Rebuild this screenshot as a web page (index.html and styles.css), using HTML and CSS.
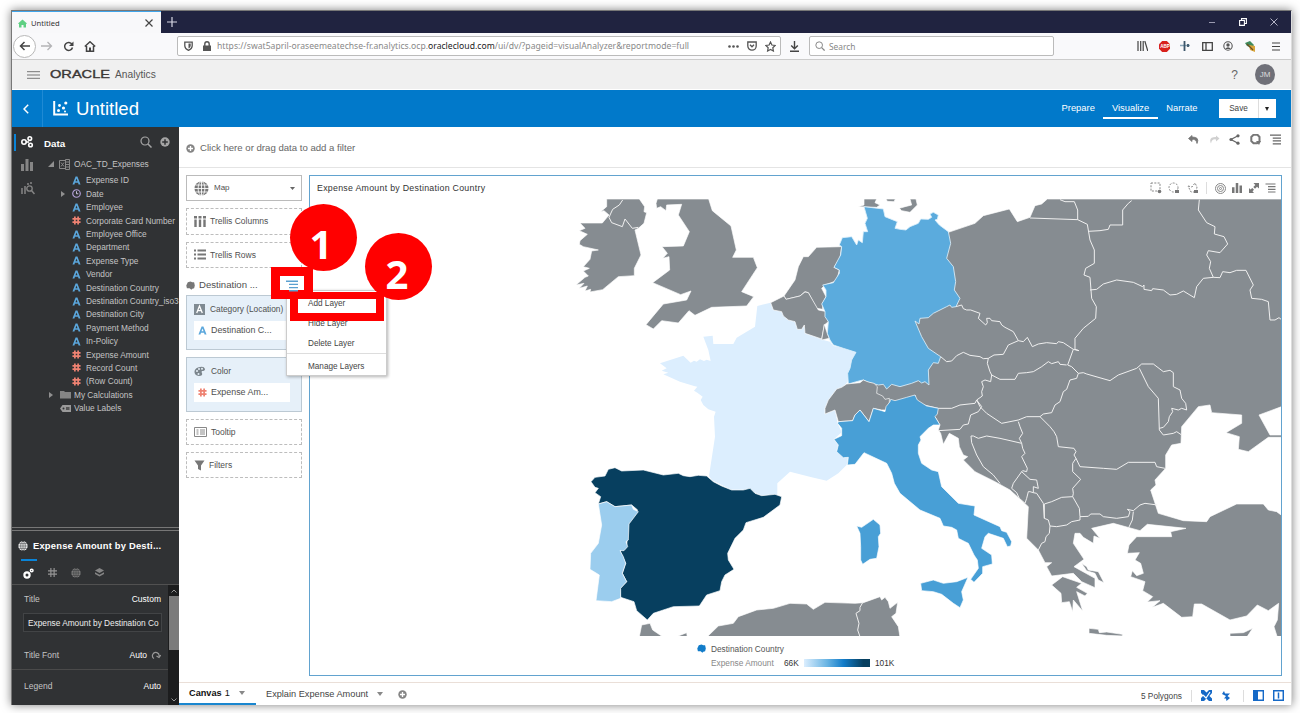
FILE: index.html
```html
<!DOCTYPE html>
<html lang="en">
<head>
<meta charset="utf-8">
<title>Untitled</title>
<link rel="stylesheet" href="styles.css">
</head>
<body>
<svg class="defs" width="0" height="0">
<defs>
<symbol id="a" viewBox="0 0 10 10"><path d="M.5 9.5 4 .5h2l3.5 9H7.300L6.700 7.600H3.300L2.700 9.500zM3.900 5.900h2.200L5 2.800z" fill="#5ba7dc"/></symbol>
<symbol id="hash" viewBox="0 0 10 10"><path d="M3.200.5v9M6.800.5v9M.5 3.200h9M.5 6.800h9" stroke="#ee8272" stroke-width="1.900" fill="none"/></symbol>
<symbol id="clock" viewBox="0 0 10 10"><circle cx="5" cy="5" r="4.200" fill="none" stroke="#b3a0d8" stroke-width="1.300"/><path d="M5 2.500V5.300h2" stroke="#d9cff0" fill="none"/></symbol>
<symbol id="globe" viewBox="0 0 16 16"><circle cx="8" cy="8" r="7.500" fill="currentColor"/><g fill="none" stroke="var(--grid)" stroke-width=".9"><ellipse cx="8" cy="8" rx="3.600" ry="7.500"/><path d="M8 0v16M0 8h16M1.500 4.300h13M1.500 11.700h13"/></g></symbol>
<symbol id="plus" viewBox="0 0 10 10"><circle cx="5" cy="5" r="4.700" fill="currentColor"/><path d="M5 2.200v5.600M2.200 5h5.600" stroke="var(--grid)" stroke-width="1.500"/></symbol>
<symbol id="menu" viewBox="0 0 12 12"><path d="M0 1.200h12M3 4.400h9M3 7.600h9M3 10.800h9" stroke="currentColor" stroke-width="1.400"/></symbol>
<symbol id="bars" viewBox="0 0 12 12"><path d="M0 5h3v7H0zM4.500 0h3v12h-3zM9 3h3v9H9z" fill="currentColor"/></symbol>
<symbol id="search" viewBox="0 0 12 12"><circle cx="5" cy="5" r="4" fill="none" stroke="currentColor" stroke-width="1.200"/><path d="M8 8l3.500 3.500" stroke="currentColor" stroke-width="1.500"/></symbol>
<symbol id="blob" viewBox="0 0 10 10"><path d="M2 1.500 5 .5 7 1.500 9 1.300 9.800 5 9 8 7 8.500 6 9.800 4 8 1 8 .3 5z" fill="currentColor"/></symbol>
</defs>
</svg>

<div class="window">
  <header class="tabbar">
    <div class="tab"><svg width="9" height="9" viewBox="0 0 9 9"><path d="M0 4.500 4.500.5 9 4.500 8 5V8.500H5.500V6h-2v2.500H1V5z" fill="#5fd083"/></svg><span>Untitled</span><svg class="push" width="8" height="8"><path d="M.5.5l7 7M7.500.5l-7 7" stroke="#444" stroke-width="1.200"/></svg></div>
    <svg class="newtab" width="10" height="10"><path d="M5 0v10M0 5h10" stroke="#d8d8e4" stroke-width="1.200"/></svg>
    <div class="winctl">
      <svg width="8" height="8"><path d="M1 4.500h6" stroke="#9a9ab0"/></svg>
      <svg width="8" height="8"><path d="M.6 2.500h4.800v4.900H.6zM2.500 2.500V.6h4.900v4.900h-2" fill="none" stroke="#fff" stroke-width="1.100"/></svg>
      <svg width="8" height="8"><path d="M.5.5l7 7M7.500.5l-7 7" stroke="#b4b4c6"/></svg>
    </div>
  </header>

  <div class="nav">
    <span class="back"><svg width="12" height="10"><path d="M11 5H2M5.500 1 1.500 5l4 4" fill="none" stroke="#444" stroke-width="1.500"/></svg></span>
    <svg class="fwd" width="12" height="10"><path d="M0 5h10M6.500 1l4 4-4 4" fill="none" stroke="#b4b4b6" stroke-width="1.300"/></svg>
    <svg class="reload" width="11" height="11"><path d="M9 3.200A4 4 0 1 0 9.500 6.500" fill="none" stroke="#444" stroke-width="1.500"/><path d="M10.500.5v4.500H6z" fill="#444"/></svg>
    <svg class="home" width="12" height="11"><path d="M.8 5.500 6 .8l5.200 4.700M2.500 5v5.200h7V5" fill="none" stroke="#444" stroke-width="1.500"/><path d="M5 6.500h2V10H5z" fill="#444"/></svg>
    <div class="url">
      <svg width="9" height="10"><path d="M.8 1.200h7.400V5Q8 8 4.500 9.300 1 8 .8 5z" fill="none" stroke="#555" stroke-width="1.300"/><path d="M4.500 2.500v5Q6.500 6.500 6.700 5V2.500z" fill="#555"/></svg>
      <svg class="lock" width="8" height="10"><path d="M0 4.500h8V10H0z" fill="#555"/><path d="M1.800 5V3a2.200 2.200 0 0 1 4.400 0v2" fill="none" stroke="#555" stroke-width="1.400"/></svg>
      <span class="addr">https://swat5april-oraseemeatechse-fr.analytics.ocp.<b>oraclecloud.com</b>/ui/dv/?pageid=visualAnalyzer&amp;reportmode=full</span>
      <svg class="push" width="11" height="3"><circle cx="1.500" cy="1.500" r="1.300" fill="#555"/><circle cx="5.500" cy="1.500" r="1.300" fill="#555"/><circle cx="9.500" cy="1.500" r="1.300" fill="#555"/></svg>
      <svg width="10" height="10"><path d="M.8 1h8.400v4A4.200 4.200 0 0 1 .8 5z" fill="none" stroke="#555" stroke-width="1.300"/><path d="M3 3.800l2 2 2-2" fill="none" stroke="#555" stroke-width="1.300"/></svg>
      <svg width="11" height="11" viewBox="0 0 11 11"><path d="M5.500 1 6.900 4l3.300.4-2.400 2.300.6 3.300-2.900-1.600L2.600 10l.6-3.300L.8 4.400 4.100 4z" fill="none" stroke="#555" stroke-width="1.200"/></svg>
    </div>
    <svg class="dl" width="9" height="11"><path d="M4.500 0v7.500M1.200 4.500l3.300 3.300 3.300-3.300M0 10.200h9" fill="none" stroke="#444" stroke-width="1.400"/></svg>
    <div class="searchbox"><svg width="10" height="10"><use href="#search"/></svg><span>Search</span></div>
    <div class="tools">
      <svg width="11" height="10"><path d="M1 0v10M3.700 0v10M6.200 0v10M7.800 0l3 10" stroke="#444" stroke-width="1.200"/></svg>
      <svg width="11" height="11" viewBox="0 0 11 11"><path d="M3.200 0h4.600L11 3.200v4.600L7.800 11H3.200L0 7.800V3.200z" fill="#d8201c"/><text x="1.200" y="7.200" font-size="4.600" font-weight="700" fill="#fff">ABP</text></svg>
      <svg width="11" height="11"><path d="M0 4.500h10" stroke="#8aa7b8" stroke-width="1.500"/><path d="M4.500 0v10M8 3v3" stroke="#3c566a" stroke-width="1.800"/></svg>
      <svg width="11" height="9"><path d="M.7.700h9.600v7.600H.7zM4 .7v7.600" fill="none" stroke="#444" stroke-width="1.300"/></svg>
      <svg width="10" height="10"><circle cx="5" cy="5" r="4.200" fill="none" stroke="#555" stroke-width="1.100"/><circle cx="5" cy="4" r="1.700" fill="#555"/><path d="M2 8q3-3.500 6 0z" fill="#555"/></svg>
      <svg width="12" height="11"><path d="M1 2 6 0 10 4 8 7 3 5z" fill="#3f8a5c"/><path d="M5 4l6 1v6L6 9z" fill="#d9a53a"/><path d="M3 3l6 6" stroke="#6c4d20" stroke-width="1.300"/></svg>
      <svg width="8" height="9"><path d="M0 1h8M0 4.500h8M0 8h8" stroke="#444" stroke-width="1.200"/></svg>
    </div>
  </div>

  <div class="brand">
    <svg width="13" height="8"><path d="M0 .7h13M0 4h13M0 7.300h13" stroke="#777" stroke-width="1"/></svg>
    <svg class="oracle" width="63" height="12" viewBox="0 0 63 12"><text x="0" y="9" font-size="10.500" textLength="60" lengthAdjust="spacingAndGlyphs" fill="#3b3735" stroke="#3b3735" stroke-width=".35">ORACLE</text></svg>
    <span class="product">Analytics</span>
    <span class="help">?</span>
    <span class="avatar">JM</span>
  </div>

  <div class="bluebar">
    <span class="chev"><svg width="6" height="10"><path d="M5.200.8 1 5l4.200 4.200" fill="none" stroke="#fff" stroke-width="1.500"/></svg></span>
    <svg class="logo" width="15" height="15"><path d="M1.200 0v13.500H15" fill="none" stroke="#fff" stroke-width="2"/><circle cx="5.500" cy="9.500" r="1.500" fill="#fff"/><circle cx="6.500" cy="4.500" r="1.400" fill="#fff"/><circle cx="10.500" cy="7" r="1.600" fill="#fff"/><circle cx="12.800" cy="2" r="1.600" fill="#fff"/><circle cx="12" cy="10.500" r="1" fill="#fff"/></svg>
    <h1>Untitled</h1>
    <nav class="modes"><span>Prepare</span><span class="on">Visualize</span><span>Narrate</span></nav>
    <div class="save"><span>Save</span><i></i></div>
  </div>

  <div class="body">
    <aside class="side">
      <section class="data">
        <div class="strip">
          <svg width="13" height="12"><g fill="none" stroke="#fff" stroke-width="1.600"><circle cx="3" cy="6" r="2.200"/><circle cx="8.800" cy="2.600" r="1.800"/><circle cx="9.500" cy="9" r="1.800"/><path d="M5 6h3"/></g></svg>
          <svg class="dim" width="12" height="12"><use href="#bars"/></svg>
          <svg class="dim" width="14" height="13"><path d="M1 6v6M4 4v8M7 1v2M10 0v2" stroke="currentColor" stroke-width="1.500"/><circle cx="8.500" cy="6.500" r="2.700" fill="none" stroke="currentColor" stroke-width="1.300"/><path d="M10.500 8.500l3 3.500" stroke="currentColor" stroke-width="1.500"/></svg>
        </div>
        <div class="tree">
          <div class="dhead"><b>Data</b><svg class="push" width="12" height="12"><use href="#search"/></svg><svg width="10" height="10"><use href="#plus"/></svg></div>
          <div class="root"><svg width="6" height="6"><path d="M6 0v6H0z" fill="#909090"/></svg><svg class="xls" width="11" height="11"><path d="M.5 1.500h6v8h-6zM6.500.5h4v10h-4zM2 3.500l3 4M5 3.500l-3 4M7 3h3M7 5.500h3M7 8h3" fill="none" stroke="#888"/></svg><span>OAC_TD_Expenses</span></div>
          <div class="leaf"><svg><use href="#a"/></svg>Expense ID</div>
          <div class="leaf exp"><svg><use href="#clock"/></svg>Date</div>
          <div class="leaf"><svg><use href="#a"/></svg>Employee</div>
          <div class="leaf"><svg><use href="#hash"/></svg>Corporate Card Number</div>
          <div class="leaf"><svg><use href="#a"/></svg>Employee Office</div>
          <div class="leaf"><svg><use href="#a"/></svg>Department</div>
          <div class="leaf"><svg><use href="#a"/></svg>Expense Type</div>
          <div class="leaf"><svg><use href="#a"/></svg>Vendor</div>
          <div class="leaf"><svg><use href="#a"/></svg>Destination Country</div>
          <div class="leaf"><svg><use href="#a"/></svg>Destination Country_iso3</div>
          <div class="leaf"><svg><use href="#a"/></svg>Destination City</div>
          <div class="leaf"><svg><use href="#a"/></svg>Payment Method</div>
          <div class="leaf"><svg><use href="#a"/></svg>In-Policy</div>
          <div class="leaf"><svg><use href="#hash"/></svg>Expense Amount</div>
          <div class="leaf"><svg><use href="#hash"/></svg>Record Count</div>
          <div class="leaf"><svg><use href="#hash"/></svg>(Row Count)</div>
          <div class="leaf top exp"><svg viewBox="0 0 11 9"><path d="M0 1h4l1 1h6v6.500H0z" fill="#858585"/></svg>My Calculations</div>
          <div class="leaf top"><svg viewBox="0 0 11 9"><path d="M0 4.500 2.500 1H11v7H2.500z" fill="#9a9a9a"/><circle cx="3.500" cy="4.500" r="1" fill="#303234"/><path d="M6 3h3.500v3H6z" fill="#555"/></svg>Value Labels</div>
        </div>
      </section>
      <section class="props">
        <div class="ptitle"><svg width="10" height="10"><use href="#globe"/></svg><b>Expense Amount by Desti...</b></div>
        <div class="ptabs">
          <span class="on"><svg width="11" height="11"><circle cx="4" cy="7" r="2.600" fill="none" stroke="#fff" stroke-width="2.200"/><circle cx="8.700" cy="2.500" r="1.300" fill="none" stroke="#fff" stroke-width="1.500"/></svg></span>
          <span><svg width="9" height="9" viewBox="0 0 10 10"><path d="M3.200 0v10M6.800 0v10M0 3.200h10M0 6.800h10" stroke="#959595" stroke-width="1.300"/></svg></span>
          <span class="dim"><svg width="10" height="10"><use href="#globe"/></svg></span>
          <span><svg width="9" height="9"><path d="M4.500 0 9 2.500 4.500 5 0 2.500zM0 4.300l4.500 2.400L9 4.300V6L4.500 8.500 0 6z" fill="#858585"/></svg></span>
        </div>
        <div class="pscroll">
          <div class="prows">
            <div class="prow r1"><span>Title</span><em>Custom</em></div>
            <div class="field">Expense Amount by Destination Co</div>
            <div class="prow r2"><span>Title Font</span><em>Auto</em><svg width="10" height="9"><path d="M3 7.500A3.300 3.300 0 1 1 8 5.500M9.800 4 8 6.500 5.500 5" fill="none" stroke="#999" stroke-width="1.200"/></svg></div>
            <div class="prow r3"><span>Legend</span><em>Auto</em></div>
          </div>
          <div class="sbar"><svg width="6" height="4"><path d="M.5 3.500 3 1l2.500 2.500" fill="none" stroke="#999"/></svg><i></i><svg width="6" height="4"><path d="M.5.500 3 3 5.500.500" fill="none" stroke="#999"/></svg></div>
        </div>
      </section>
    </aside>

    <main class="main">
      <div class="filter">
        <svg class="dimp" width="9" height="9"><use href="#plus"/></svg><span>Click here or drag data to add a filter</span>
        <div class="acts">
          <svg width="11" height="9"><path d="M4 .5.500 3.500 4 6.500V4.500q4-1 5 4Q12 2 4 2z" fill="#777" stroke="#777" stroke-width=".8"/></svg>
          <svg width="11" height="9"><path d="M7 .5l3.500 3L7 6.500V4.500q-4-1-5 4Q-1 2 7 2z" fill="#d0d0d0"/></svg>
          <svg width="11" height="11"><path d="M9 1.800 2 5.500 9 9.200" fill="none" stroke="#666" stroke-width="1.300"/><circle cx="9" cy="1.800" r="1.600" fill="#666"/><circle cx="2" cy="5.500" r="1.600" fill="#666"/><circle cx="9" cy="9.200" r="1.600" fill="#666"/></svg>
          <svg width="11" height="11"><path d="M3.500.8h4L9.500 3v4L7 9.200H3.500L1.300 7V3z" fill="none" stroke="#777" stroke-width="2"/><path d="M6 7h5l-2 4z" fill="#777"/></svg>
          <svg width="11" height="11"><use href="#menu"/></svg>
        </div>
      </div>

      <div class="work">
        <div class="shelf">
          <div class="pick"><svg width="15" height="15"><use href="#globe"/></svg><span>Map</span><svg class="push" width="5" height="3"><path d="M0 0h5L2.500 3z" fill="#666"/></svg></div>
          <div class="drop"><svg width="12" height="11"><path d="M1.500 3.500V11M6 3.500V11M10.500 3.500V11M0 1.200h3M4.500 1.200h3M9 1.200h3" stroke="#777" stroke-width="2.400"/></svg><span>Trellis Columns</span></div>
          <div class="drop"><svg width="12" height="11"><path d="M3.500 1.500H12M3.500 5.500H12M3.500 9.500H12M0 1.500h2M0 5.500h2M0 9.500h2" stroke="#777" stroke-width="2.200"/></svg><span>Trellis Rows</span></div>
          <div class="layer"><svg width="9" height="9"><use href="#blob"/></svg><span>Destination ...</span></div>
          <div class="well"><div class="wh"><svg width="11" height="11"><path d="M0 0h11v11H0z" fill="#7f8a92"/><path d="M2.700 9 5.500 2l2.800 7M3.700 6.700h3.600" stroke="#fff" stroke-width="1.300" fill="none"/></svg><span>Category (Location)</span></div><div class="chip"><svg width="9" height="9"><use href="#a"/></svg><span>Destination C...</span></div></div>
          <div class="well"><div class="wh"><svg width="12" height="11"><path d="M6 1Q10 0 11 3 11 5 8 5 7 6 8 7 9 10 5 10 0 9.500.5 5 1.500 1.500 6 1z" fill="#7b858c"/><g fill="#e4eef6"><circle cx="3" cy="5" r="1"/><circle cx="5" cy="3" r="1"/><circle cx="8" cy="2.700" r="1"/><circle cx="4.500" cy="8" r="1"/></g></svg><span>Color</span></div><div class="chip"><svg width="9" height="9"><use href="#hash"/></svg><span>Expense Am...</span></div></div>
          <div class="drop"><svg width="13" height="10"><path d="M.5.5h12v9H.5z" fill="none" stroke="#888"/><path d="M2.500 3h2M6 3h5M2.500 5h2M6 5h5M2.500 7h2M6 7h5" stroke="#888"/></svg><span>Tooltip</span></div>
          <div class="drop"><svg width="11" height="11"><path d="M.5.500h10L7 5.500v5L4 9V5.500z" fill="#777"/></svg><span>Filters</span></div>
        </div>
        <section class="viz">
          <div class="vhead"><span>Expense Amount by Destination Country</span>
            <div class="vacts">
              <svg width="12" height="12"><path d="M1 1h9v8H1z" fill="none" stroke="#888" stroke-dasharray="2 1.300"/><circle cx="9.500" cy="9.500" r="1.800" fill="#777"/></svg>
              <svg width="12" height="12"><circle cx="5.500" cy="5.500" r="4.500" fill="none" stroke="#888" stroke-dasharray="2 1.300"/><path d="M7 8h4v3H7z" fill="#777"/></svg>
              <svg width="12" height="12"><path d="M1 4l4 1 3-4 2 4-1 5H4z" fill="none" stroke="#888" stroke-dasharray="2 1.300"/><path d="M7 8h4v3H7z" fill="#777"/></svg>
              <i></i>
              <svg width="11" height="11"><g fill="none" stroke="#888"><circle cx="5.500" cy="5.500" r="5"/><circle cx="5.500" cy="5.500" r="3"/><circle cx="5.500" cy="5.500" r="1"/></g></svg>
              <svg width="10" height="10"><use href="#bars"/></svg>
              <svg width="10" height="10"><path d="M4.500 0H10v5.500L8 3.700 6 5.700 4.300 4l2-2zM0 5v5h5L3.500 8.300 5 6.800 3.300 5 1.500 6.500z" fill="#777"/></svg>
              <svg width="11" height="10"><use href="#menu"/></svg>
            </div>
          </div>
          <svg class="map" viewBox="310 199 971 437" width="971" height="437">
            <g transform="translate(560 190) scale(.33333)" class="land">
              <path d="M140 27H238L254 50 252 65 260 68 252 100 235 115 225 120 243 195 223 235V257L175 260 128 299 90 306 92 298 75 303 82 288 58 295 72 280 48 285 75 262 85 258 70 243 88 235 70 230 90 208 95 183 115 180 70 170 58 163 60 152 82 133 58 122 75 115 60 99H127L147 75 132 62 122 65 140 50Z"/>
              <path class="bd" d="M188 30 178 45 158 58 147 82 155 98 187 110 195 87 217 115 235 112"/>
              <path d="M292 27H446L457 62 513 108 529 180 518 202H580L592 233 545 305 581 320 560 348 455 352 405 376 387 362 355 399 305 392 280 417 258 404 310 342 380 330 393 303 362 314 278 278 329 240 327 200 308 205 322 190 306 170 370 168 388 125 355 75 365 43 320 45 318 62 302 50 290 55 288 40Z"/>
              <path class="fr" d="M592 348 632 338 640 360 668 365 710 400 715 415 735 410 750 430 790 450 810 455 820 468 860 475 888 485 870 530 863 575 845 598 800 645 795 672 825 660 833 700 845 727 822 748 835 765 830 785 865 802 860 825 835 850 800 872 755 862 690 845 652 880V915L605 917 570 900H515L455 870 447 858 465 740 462 680 467 665 445 658 430 645 422 630 428 620 412 608 402 602 412 590 402 588 360 575 310 553 325 548 305 542 320 535 300 520 370 497 392 518 402 512 410 515 420 508 432 513 440 509 452 513 445 480 430 440 458 437 460 462H520L530 443 585 410Z"/>
              <path d="M770 172 845 170 840 205 822 232 838 240 830 272 795 285 785 295 798 320 788 340 788 358 770 355 745 308 735 305 720 318 678 328 672 318 705 270 715 230 730 200 745 200Z"/>
              <path d="M632 338 672 318 678 328 720 318 735 306 745 308 775 360 800 365 805 395 793 405 785 447 735 430 733 405 725 418H712L705 395 685 390 670 378 665 365 640 360Z"/>
              <path d="M793 403 800 425 808 445 785 450Z"/>
            </g>
            <g transform="translate(800 190) scale(.33333)" class="land">
              <path d="M445 127 525 100 550 77 628 57 652 95 690 82 705 47 725 42 742 27H1450V648L1377 675 1410 735H1450V742H1405L1345 785 1315 778 1318 740 1278 728 1325 700V675L1235 668 1230 645 1195 650 1145 710 1143 760 1115 765 1097 795V835L1065 870 1068 885 1052 900 1075 970 1150 992 1220 995 1230 980 1310 942H1390L1405 960 1430 965 1450 980V1345H1433L1422 1310 1432 1290 1436 1240 1405 1262 1372 1245 1340 1278 1290 1290 1205 1242H1183L1178 1280 1145 1282 1090 1240 1057 1252 1080 1232 1042 1236 1058 1220 1028 1202 1035 1175 992 1160 997 1142 1010 1157 1030 1150 1022 1120 1005 1110 1018 1088 982 1090 987 1065 1010 1040H1115L1112 1025 1158 1015 1042 1003 1020 1022 940 1000 875 1015 900 1045 882 1038 880 1060 850 1042 840 1030H825L820 1060 852 1108 822 1130 885 1165V1193L845 1175 820 1150 755 1158 740 1130 755 1118 735 1118 715 1080 680 1045 685 950 630 900 585 875 525 845 490 810 503 800 490 795 478 770 475 745 448 730 430 763 422 730 415 720 420 705 405 680 360 650 270 640 225 620 220 560 300 400Z"/>
              <g class="bd"><path d="M690 84 833 89 862 103M780 29 795 35H823L833 60V89M862 103 870 150 883 180V220L857 235 852 255 870 262 873 300 875 325 889 350 887 385 850 415 825 445V478L837 482M865 124 900 122 925 118 930 105H968V60L985 40 995 32"/>
              <path d="M870 300 890 298 910 282 950 270 1000 277 1028 290 1032 285 1032 298 1055 302 1058 296 1090 300 1110 315 1130 313 1150 303 1183 323 1190 290 1210 265 1240 262 1260 263 1268 245 1290 248 1310 241H1338L1360 285 1350 300 1355 325 1385 328 1405 335 1410 390H1425L1437 383 1446 390M1198 29 1195 60 1220 98 1245 110 1243 132 1272 140 1283 162 1260 188 1225 182 1220 195 1232 215 1228 235 1240 262"/>
              <path d="M468 350 485 345 490 356 500 360 512 360 540 370 535 385 557 405 562 398 560 385 570 385 575 392 600 395 605 405 615 412 640 425 655 452 670 455 682 442 697 470 715 462 740 458 770 461 775 455 790 458 820 478 837 482M422 500 440 515 455 513 470 497 490 487 510 496 540 500 550 506 565 505 582 495 610 493 625 465 655 452M565 505 562 520 570 545 575 555 600 568H645L655 550 680 548 700 545 725 530 745 515 755 521 775 515 780 523 800 525M820 478 803 525 815 530 835 550M575 555 572 575 555 570 545 575 550 590 545 605 547 618 530 630 540 650 560 670 605 700 655 690 680 680H720L730 672 755 668 765 645 780 635 790 605 800 598 810 570 830 565 835 550 850 548 860 552 930 572 955 555 1010 535 1025 522 1060 522 1090 545 1110 541 1120 548V590L1140 600 1145 625 1157 640 1160 660 1145 655 1135 660 1115 655 1118 665 1108 680 1105 695 1090 712 1078 715"/>
              <path d="M1018 535 1045 590 1075 625 1078 720 1090 735 1120 730 1130 725 1145 735M345 615 350 640 415 655 455 655 480 645 525 640 530 630 545 650M720 680 750 710 762 725 770 740 775 770 822 775 828 785 822 795 828 805 840 830 910 835 950 838 985 817H1065L1070 830 1095 835M655 695 660 710 668 730 658 745 665 760 668 775 675 790 665 800 682 835 680 845 668 842 665 845 690 868 710 870 715 895 700 890 700 908 690 905 685 905 680 925 675 940M828 805 818 820 818 845 842 868 818 895 820 910 818 920 838 955 840 980 865 979 872 972 900 972 910 980 950 985 985 980 990 965 982 958 1000 962 1020 945 1035 940 1072 945M1000 965 997 990 985 1015M818 920 785 922 755 935 733 942V985L745 990 750 1008 770 1010 800 1005 815 995 840 990 840 980M750 1008 748 1030 738 1040 735 1055 725 1060 715 1080M733 985 730 940 710 910 700 908M675 940 658 925 650 908 635 895 640 880 665 845M665 760 600 745 560 738 535 745 520 738 513 738 515 758 530 795 550 830 580 855 600 880M415 722 480 718 490 705 505 702 512 675 535 665 545 650"/></g>
              <path d="M192 27H230L225 38 240 45 230 52 175 50 192 45ZM258 27H286L282 35 262 34ZM298 55 315 50 335 45 330 27H348L352 45 330 67 305 62Z"/>
              <path class="de" d="M127 143 155 140 170 165 175 150 187 158 190 125 203 125 195 100 202 85 192 50 250 57 255 80 292 95 285 115 300 118 318 120 330 110 355 100 362 87 385 88 395 82 390 72 400 67 415 75 412 88 405 90 418 105 445 125 452 160 440 205 460 230 467 275 463 300 480 325 468 350 455 352 450 345 440 350 400 370 385 383 360 385 357 402 345 393 365 440 385 475 422 500 415 520 400 518 385 540 387 585 375 575 365 579 355 572 335 580 300 590 275 583 260 597 250 583 235 585 200 575 190 570 180 572 145 582 143 550 150 535 155 510 168 487 130 475 100 465 90 450 82 430 85 395 75 380 75 365 65 342 78 320 78 300 68 285 100 278 118 250 118 240 102 232 122 195 125 170 118 165Z"/>
              <path d="M110 597 125 592 140 582 180 578 190 570 205 576 222 580 232 590 230 610 248 618 255 628 268 625 268 640 265 660 245 660 220 655 207 695 180 660 165 675 158 692 115 695 105 660 75 672 75 655 85 630Z"/>
              <path class="it" d="M115 695 158 692 165 675 180 660 207 695 220 655 245 662 255 665 258 650 270 635 272 628 285 632 320 622 345 615 352 630 380 648 415 655 412 672 405 680 420 705H400L385 715 360 740 363 750 355 765 355 790 365 820 395 840 415 845 425 890 475 940 525 948 522 975 600 1010 605 1022 620 1027 635 1055 632 1068 622 1070 610 1045 565 1030 555 1040 545 1075 575 1095 577 1122 548 1130V1150L522 1177 512 1168 535 1135 532 1110 522 1095 505 1060 495 1055 475 1045 470 1020 455 1012 430 1008 420 985 360 960 300 910 283 880 275 850 260 820 192 788 165 823 142 825 145 802 130 803 110 785 115 765 102 748 125 737 125 715 113 700Z"/>
            </g>
            <g transform="translate(560 400) scale(.33333)" class="land">
              <path class="it" d="M890 378 905 382 940 358 960 375 962 400 955 410 957 440 950 475 930 478 908 493 902 480 902 440 900 400Z"/>
              <path class="es" d="M93 245 105 232 135 228 145 208 165 203 185 213 250 210 310 225 355 220 370 227 390 230 415 226 440 228 460 245 485 258 515 270 550 270 570 265 585 280 605 287 645 283 665 290 660 315 610 352 558 368 550 390 525 415 503 460 505 480 522 508 495 525 485 545 480 572 440 585 418 618 340 620 280 640 262 660 230 632 222 605 182 592 180 565 200 545 187 520 197 490 180 452 200 440 205 370 233 330 215 315 165 320 140 305 115 312 122 290 105 278 115 265 105 262Z"/>
              <path class="pt" d="M115 312 140 305 165 320 215 315 220 328 235 335 207 372 205 420 198 425 203 440 192 452 180 452 190 470 197 490 187 520 200 545 182 565V595L155 605 108 602 118 525 90 508 92 460 115 430 125 375Z"/>
              <path d="M237 715 245 675 270 670 278 690 315 715ZM345 712 380 698 382 712ZM440 712 475 678 520 670 535 650 590 630 640 625 690 610 740 612 760 628 795 607 885 610 910 608 960 590 965 600 975 592 985 605 990 625 1013 607 1008 640 995 650 1015 680 1020 712Z"/>
              <path class="bd" d="M908 608 900 622 900 632 888 640 897 670 893 690 900 710"/>
            </g>
            <g transform="translate(900 400) scale(.33333)" class="land">
              <path class="it" d="M62 550 100 540 130 550 170 545 204 532 185 575 190 600 180 623 160 610 125 583 100 575 65 572Z"/>
              <path d="M455 555 488 530 545 550 530 562 562 580 555 588 530 575 548 633 520 600 518 635 508 605 485 608 483 580ZM545 490 560 500 565 510 595 515 612 548 595 540 585 520 560 512ZM567 685 595 688 598 698 620 696 667 703V708L620 706 567 700ZM990 700 1030 698 1058 685 1040 712H990Z"/>
            </g>
          </svg>
          <div class="legend">
            <svg width="9" height="9"><use href="#blob"/></svg><span class="l1">Destination Country</span>
            <span class="l2">Expense Amount</span><span class="lo">66K</span><i></i><span class="hi">101K</span>
          </div>
        </section>
      </div>

      <footer class="foot">
        <span class="ft on"><b>Canvas</b> 1<i></i></span>
        <span class="ft two">Explain Expense Amount<i></i></span>
        <svg class="dimp" width="9" height="9"><use href="#plus"/></svg>
        <div class="status"><span>5 Polygons</span><u></u>
          <svg width="11" height="11"><path d="M0 0h3l2.500 2.500L8 0h3v3L8.500 6 11 8.500V11H8L5.500 8.500 3 11H0V8l2.500-2.500L0 3z" fill="#1569c7"/><path d="M2 5l3 3 4-6" fill="none" stroke="#fff" stroke-width="1.200"/></svg>
          <svg class="bolt" width="9" height="10"><path d="M2 0l1 2.500H8L5.500 5 8 7 4.500 10 4 7.500H2L4 5 0 3z" fill="#1569c7"/></svg><u></u>
          <svg width="11" height="11"><path d="M.7.700h9.600v9.600H.7z" fill="none" stroke="#1569c7" stroke-width="1.400"/><path d="M0 0h5v11H0z" fill="#1569c7"/></svg>
          <svg width="11" height="11"><path d="M.7.700h9.600v9.600H.7zM5.500 2.500v6" fill="none" stroke="#1569c7" stroke-width="1.500"/></svg>
        </div>
      </footer>
    </main>
  </div>
</div>

<div class="popup"><span>Add Layer</span><span>Hide Layer</span><span>Delete Layer</span><hr><span>Manage Layers</span></div>
<div class="mark m1"><svg width="12" height="12"><use href="#menu"/></svg></div>
<div class="mark m2"></div>
<div class="ball b1">1</div>
<div class="ball b2">2</div>
</body>
</html>
```
FILE: styles.css
```css
* { box-sizing: border-box; }
body { margin: 0; width: 1300px; height: 713px; overflow: hidden; background: #fff; font: 8.4px/12px "Liberation Sans", Arial, sans-serif; color: #444; --grid: #fff; }
svg { display: block; flex: none; }
.defs { position: absolute; }
span, b { white-space: nowrap; }
.push { margin-left: auto; }
.window { margin: 10px 0 0 11px; width: 1281px; height: 695px; display: flex; flex-direction: column; background: #fff; border-left: 1px solid #777; border-top: 1px solid #777; border-right: 1px solid #ddd; box-shadow: 0 0 9px rgba(0,0,0,.5); }

.tabbar { height: 22px; display: flex; align-items: center; background: #202340; }
.tab { width: 149px; height: 22px; padding: 1px 8px 0 6px; display: flex; align-items: center; background: #f8f8fa; border-top: 1px solid #3fa4ea; font: 7.6px "Noto Sans", sans-serif; color: #333; }
.tab span { margin-left: 4px; }
.newtab { margin-left: 6px; }
.winctl { margin-left: auto; padding-right: 13px; display: flex; gap: 23px; }

.nav { height: 27px; display: flex; align-items: center; background: #f9f9fb; border-bottom: 1px solid #ccc; }
.back { width: 23px; height: 23px; margin-left: 1px; display: grid; place-items: center; border: 1px solid #b8b8b8; border-radius: 50%; background: #fff; }
.fwd { margin-left: 5px; }
.reload { margin-left: 10px; }
.home { margin-left: 10px; }
.url { width: 604px; height: 20px; margin-left: 81px; padding: 0 4px 0 6px; display: flex; align-items: center; background: #fff; border: 1px solid #bbb; border-radius: 2px; font: 8.6px "Noto Sans", sans-serif; color: #888; }
.url .push ~ svg { margin-left: 8px; }
.lock { margin-left: 10px; }
.addr { margin-left: 6px; letter-spacing: .02px; }
.addr b { font-weight: 400; color: #222; }
.dl { margin-left: 9px; }
.searchbox { width: 245px; height: 20px; margin-left: 10px; padding-left: 5px; display: flex; align-items: center; gap: 4px; background: #fff; border: 1px solid #bbb; border-radius: 2px; font: 8.4px "Noto Sans", sans-serif; color: #888; }
.tools { margin-left: auto; padding-right: 11px; display: flex; align-items: center; gap: 10.5px; }
.tools svg:last-child { margin-left: 6px; }

.brand { height: 30px; display: flex; align-items: center; padding: 0 16px 0 15px; background: #f0f0f0; border-bottom: 1px solid #fff; }
.oracle { margin-left: 10px; }
.product { margin-left: 2px; font-size: 10.2px; color: #555; }
.help { margin-left: auto; font-size: 12px; color: #666; }
.avatar { width: 20px; height: 21px; margin-left: 17px; border-radius: 50%; background: #6f7078; color: #ddd; font-size: 8px; line-height: 21px; text-align: center; }

.bluebar { height: 37px; flex: none; display: flex; align-items: center; background: #0179ca; color: #fff; }
.chev { width: 31px; height: 37px; padding-left: 11px; display: flex; align-items: center; border-right: 1px solid #1f8ad4; }
.logo { margin-left: 10px; }
h1 { margin: 0 0 0 8px; font: 18.600px/22px "Liberation Sans", sans-serif; }
.modes { margin-left: auto; display: flex; font-size: 9.400px; }
.modes span { height: 20px; padding: 0 8.500px; line-height: 17px; }
.modes .on { border-bottom: 2px solid #fff; }
.save { width: 57px; height: 19px; margin: 0 15px 0 13px; display: flex; align-items: center; background: #fff; color: #444; font-size: 8.200px; }
.save span { width: 40px; border-right: 1px solid #ddd; text-align: center; line-height: 19px; }
.save i { margin-left: 6px; border: 2.500px solid transparent; border-top: 4px solid #222; border-bottom: 0; }

.body { flex: 1; min-height: 0; display: flex; }
.side { width: 167px; flex: none; display: flex; flex-direction: column; background: #303234; color: #c4c4c4; --grid: #303234; overflow: hidden; }
.data { height: 401px; display: flex; border-bottom: 1px solid #777; }
.strip { width: 28px; flex: none; padding: 9px 0 0 9px; display: flex; flex-direction: column; gap: 11px; background: linear-gradient(#0a84d8, #0a84d8) 2px 7px / 2px 17px no-repeat; }
.dim, .dimp { color: #858585; }
.tree { flex: 1; min-width: 0; }
.dhead { height: 30px; margin-top: 1px; padding: 2px 9px 0 4px; display: flex; align-items: center; gap: 8px; font-size: 9.800px; color: #fff; }
.dhead svg { color: #a5a5a5; margin-top: -4px; }
.root { height: 16px; padding-left: 8px; display: flex; align-items: center; font-size: 8.300px; margin-top: -2px; }
.root .xls { margin: 0 4px 0 5px; }
.leaf { position: relative; height: 13.400px; margin-left: 32px; display: flex; align-items: center; gap: 5px; font-size: 8.300px; white-space: nowrap; }
.root + .leaf { margin-top: 1.800px; }
.leaf svg { width: 9px; height: 9px; }
.leaf.top { margin-left: 20px; gap: 3px; }
.leaf.top svg { width: 11px; }
.exp::before { content: ""; position: absolute; left: -11px; border: 3px solid transparent; border-left: 4px solid #909090; border-right: 0; }
.props { flex: 1; display: flex; flex-direction: column; margin-top: 2px; border-top: 1px solid #777; }
.ptitle { height: 28px; padding: 1px 0 0 6px; display: flex; align-items: center; gap: 5px; font-size: 9.400px; color: #fff; letter-spacing: .2px; }
.ptabs { height: 26px; padding-left: 9px; display: flex; gap: 8px; border-bottom: 1px solid #515151; }
.ptabs span { width: 15.500px; height: 24px; padding-top: 3px; display: grid; place-items: center; }
.ptabs .on { border-top: 2px solid #0a84d8; }
.pscroll { flex: 1; display: flex; min-height: 0; }
.prows { flex: 1; overflow: hidden; font-size: 8.500px; }
.prow { display: flex; align-items: center; padding: 0 7px 0 12px; }
.prow em { margin-left: auto; font-style: normal; color: #fff; }
.prow svg { margin-left: 4px; }
.r1 { height: 28px; }
.field { width: 139px; height: 19px; margin-left: 11px; padding-left: 4px; overflow: hidden; line-height: 18px; white-space: nowrap; background: #292b2d; border: 1px solid #424446; color: #eee; font-size: 8.300px; }
.r2 { height: 38px; padding-top: 9px; border-bottom: 1px solid #4a4a4a; }
.r3 { height: 31px; }
.sbar { width: 11px; padding: 4px 0 3px; display: flex; flex-direction: column; align-items: center; background: #1c1d1e; }
.sbar i { width: 10px; height: 54px; margin: 3px 0 auto; background: #7b7b7b; }

.main { flex: 1; min-width: 0; display: flex; flex-direction: column; }
.filter { height: 41px; flex: none; padding: 2px 10px 0 7px; display: flex; align-items: center; border-bottom: 1px solid #e4e4e4; color: #666; font-size: 9.600px; }
.filter span { margin-left: 5px; }
.acts { margin: -17px 0 0 auto; display: flex; align-items: center; gap: 9.500px; color: #666; }
.work { height: 514px; flex: none; display: flex; padding: 7px 9px 6px 7px; }
.shelf { width: 117px; display: flex; flex-direction: column; gap: 7px; color: #505050; }
.shelf svg { color: #777; }
.pick, .drop { height: 26.300px; display: flex; align-items: center; padding: 0 6px 0 8px; border: 1px solid #bbb; }
.pick span { margin-left: 5px; font-size: 8px; }
.pick svg:first-child { margin-left: -1px; }
.drop { border: 1px dashed #bdbdbd; gap: 4px; padding-left: 7px; font-size: 8.500px; }
.layer { height: 13px; display: flex; align-items: center; gap: 4px; margin: 4px 0 -4px; font-size: 9.600px; }
.well { height: 55px; padding: 7px; background: #e6f0f9; border: 1px solid #bcc9d3; font-size: 8.350px; }
.wh { height: 13px; display: flex; align-items: center; gap: 5px; }
.chip { width: 96px; height: 19px; margin-top: 5px; padding-left: 4px; display: flex; align-items: center; gap: 4px; background: #fff; font-size: 8.900px; }
.viz { width: 973px; flex: none; height: 501px; margin-left: 7px; border: 1px solid #62a3cf; display: flex; flex-direction: column; }
.work { padding-right: 0; }
.shelf { flex: none; width: 116px; }
.vhead { height: 24px; flex: none; padding: 0 5px 0 7px; display: flex; align-items: center; justify-content: space-between; font-size: 8.800px; letter-spacing: .28px; color: #333; }
.vacts { display: flex; align-items: center; gap: 6.500px; color: #777; }
.vacts i { width: 1px; height: 12px; margin: 0 1px; background: #ddd; }
.map { margin-top: -1px; }
.land path { fill: #868c91; stroke: #fff; stroke-width: 2px; stroke-linejoin: round; }
.land .bd, .land .bd path { fill: none; stroke: #f0f0f0; stroke-width: 3px; }
.land .fr { fill: #dceefe; stroke: none; }
.land .de { fill: #5babdd; stroke: #dff1fb; stroke-width: 2.500px; }
.land .it { fill: #489fd6; }
.land .es { fill: #073f5f; }
.land .pt { fill: #9bcdee; }
.legend { margin: 6px 0 0 387px; display: grid; grid-template: 13px 16px / 14px 73px 20px 66px auto; align-items: center; color: #555; font-size: 8.300px; }
.legend svg { color: #127cc9; }
.l1 { grid-column: 2 / 6; }
.l2 { grid-column: 2; color: #888; }
.legend i { height: 8px; background: linear-gradient(90deg, #dceefe, #69b4e3 35%, #127cc9 60%, #073f5f 90%); }
.hi { margin-left: 5px; color: #333; }
.lo { color: #333; }

.foot { flex: 1; display: flex; align-items: center; border-top: 1px solid #eadfd8; font-size: 9.200px; }
.ft { height: 22px; display: flex; align-items: center; gap: 3px; padding-left: 10px; }
.ft.on { width: 77px; border-bottom: 2px solid #1a86cf; color: #111; }
.ft i { margin-left: 6px; border: 3px solid transparent; border-top: 4px solid #888; border-bottom: 0; }
.ft.two { margin-right: 15px; }
.status { margin-left: auto; padding: 3px 7px 0 0; display: flex; align-items: center; gap: 9px; font-size: 8.300px; }
.status u { width: 1px; height: 12px; background: #ddd; }
.status .bolt { margin: 0 3px 0 1px; }

.popup { position: absolute; left: 286px; top: 290px; width: 101px; height: 86px; padding: 7px 0 0 21px; background: #fff; border: 1px solid #ccc; box-shadow: 1px 1px 3px rgba(0,0,0,.3); font-size: 8.200px; color: #444; }
.popup span { display: block; height: 20px; }
.popup hr { height: 1px; margin: -5px 0 7px -21px; border: 0; background: #ddd; }
.mark { position: absolute; border: 9px solid #f00; color: #5aa0d0; }
.m1 { left: 271px; top: 267px; width: 42px; height: 32px; background: #fff; padding: 4px 0 0 6px; }
.m2 { left: 290px; top: 292px; width: 94px; height: 29px; border-width: 7px 8px 8px; }
.ball { position: absolute; width: 67px; height: 67px; border-radius: 50%; background: #f00; color: #fff; font: 700 40px/67px "Open Sans", "Noto Sans", sans-serif; text-align: center; }
.b1 { left: 290px; top: 204px; padding: 6px 5px 0 0; }
.b2 { left: 365px; top: 233px; padding: 7px 3px 0 0; }
```
